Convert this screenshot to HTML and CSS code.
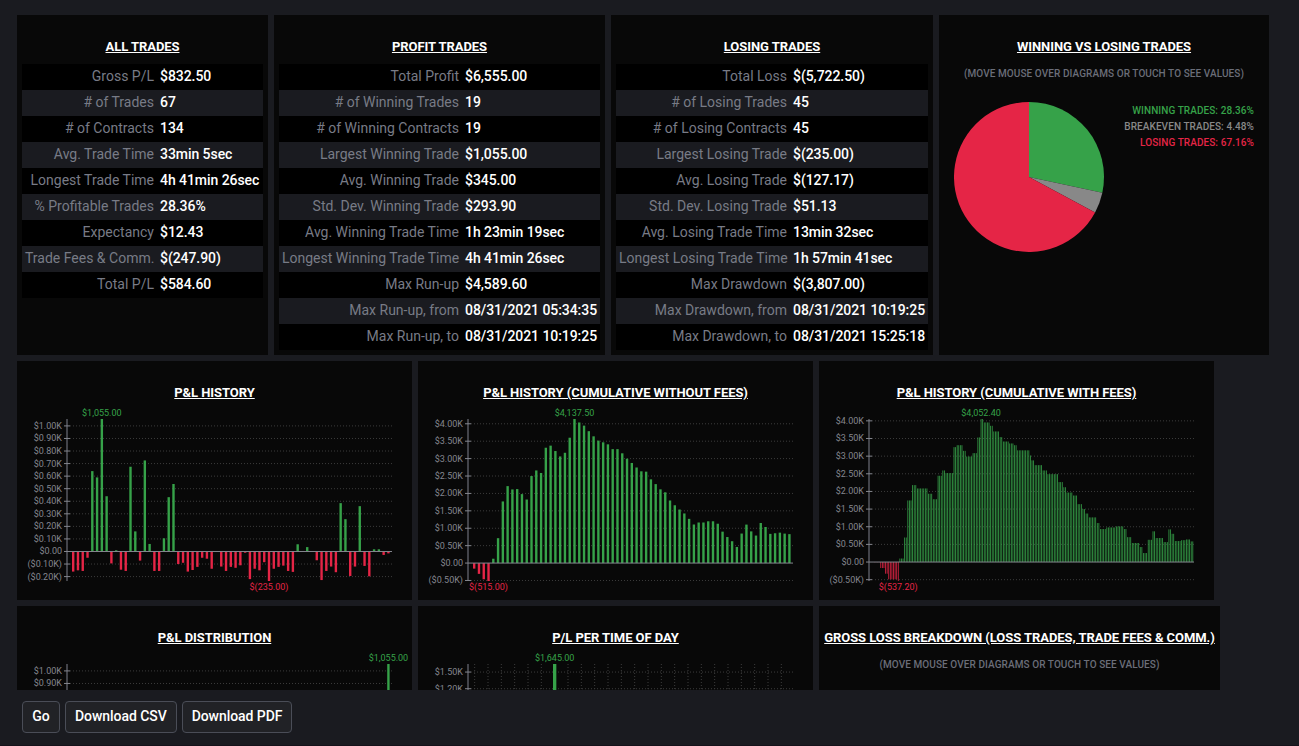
FILE: index.html
```html
<!DOCTYPE html>
<html lang="en">
<head>
    <meta charset="UTF-8">
    <meta name="viewport" content="width=device-width, initial-scale=1.0">
    <title>Trade Performance</title>
    <link rel="stylesheet" href="styles.css">
</head>
<body>

<div class="report">
    <div class="panel-row">
        <div class="panel all-trades">
            <h2>All Trades</h2>
            <table>
                <tr><td>Gross P/L</td><td>$832.50</td></tr>
                <tr><td># of Trades</td><td>67</td></tr>
                <tr><td># of Contracts</td><td>134</td></tr>
                <tr><td>Avg. Trade Time</td><td>33min 5sec</td></tr>
                <tr><td>Longest Trade Time</td><td>4h 41min 26sec</td></tr>
                <tr><td>% Profitable Trades</td><td>28.36%</td></tr>
                <tr><td>Expectancy</td><td>$12.43</td></tr>
                <tr><td>Trade Fees &amp; Comm.</td><td>$(247.90)</td></tr>
                <tr><td>Total P/L</td><td>$584.60</td></tr>
            </table>
        </div>

        <div class="panel profit-trades">
            <h2>Profit Trades</h2>
            <table>
                <tr><td>Total Profit</td><td>$6,555.00</td></tr>
                <tr><td># of Winning Trades</td><td>19</td></tr>
                <tr><td># of Winning Contracts</td><td>19</td></tr>
                <tr><td>Largest Winning Trade</td><td>$1,055.00</td></tr>
                <tr><td>Avg. Winning Trade</td><td>$345.00</td></tr>
                <tr><td>Std. Dev. Winning Trade</td><td>$293.90</td></tr>
                <tr><td>Avg. Winning Trade Time</td><td>1h 23min 19sec</td></tr>
                <tr><td>Longest Winning Trade Time</td><td>4h 41min 26sec</td></tr>
                <tr><td>Max Run-up</td><td>$4,589.60</td></tr>
                <tr><td>Max Run-up, from</td><td>08/31/2021 05:34:35</td></tr>
                <tr><td>Max Run-up, to</td><td>08/31/2021 10:19:25</td></tr>
            </table>
        </div>

        <div class="panel losing-trades">
            <h2>Losing Trades</h2>
            <table>
                <tr><td>Total Loss</td><td>$(5,722.50)</td></tr>
                <tr><td># of Losing Trades</td><td>45</td></tr>
                <tr><td># of Losing Contracts</td><td>45</td></tr>
                <tr><td>Largest Losing Trade</td><td>$(235.00)</td></tr>
                <tr><td>Avg. Losing Trade</td><td>$(127.17)</td></tr>
                <tr><td>Std. Dev. Losing Trade</td><td>$51.13</td></tr>
                <tr><td>Avg. Losing Trade Time</td><td>13min 32sec</td></tr>
                <tr><td>Longest Losing Trade Time</td><td>1h 57min 41sec</td></tr>
                <tr><td>Max Drawdown</td><td>$(3,807.00)</td></tr>
                <tr><td>Max Drawdown, from</td><td>08/31/2021 10:19:25</td></tr>
                <tr><td>Max Drawdown, to</td><td>08/31/2021 15:25:18</td></tr>
            </table>
        </div>

        <div class="panel win-loss">
            <h2>Winning vs Losing Trades</h2>
            <p class="hint">(Move mouse over diagrams or touch to see values)</p>
            <div class="pie-row">
                <svg class="pie" id="winLossPie" viewBox="0 0 150 150"></svg>
                <ul class="legend">
                    <li class="win">Winning Trades: 28.36%</li>
                    <li class="even">Breakeven Trades: 4.48%</li>
                    <li class="loss">Losing Trades: 67.16%</li>
                </ul>
            </div>
        </div>
    </div>

    <div class="panel-row">
        <div class="panel chart-panel">
            <h2>P&amp;L History</h2>
            <svg class="chart" id="historyChart"></svg>
        </div>
        <div class="panel chart-panel">
            <h2>P&amp;L History (Cumulative without fees)</h2>
            <svg class="chart" id="cumulativeChart"></svg>
        </div>
        <div class="panel chart-panel">
            <h2>P&amp;L History (Cumulative with fees)</h2>
            <svg class="chart" id="feesChart"></svg>
        </div>
    </div>

    <div class="panel-row">
        <div class="panel chart-panel">
            <h2>P&amp;L Distribution</h2>
            <svg class="chart" id="distributionChart"></svg>
        </div>
        <div class="panel chart-panel">
            <h2>P/L per time of day</h2>
            <svg class="chart" id="timeChart"></svg>
        </div>
        <div class="panel breakdown">
            <h2>Gross Loss Breakdown (Loss Trades, Trade Fees &amp; Comm.)</h2>
            <p class="hint">(Move mouse over diagrams or touch to see values)</p>
        </div>
    </div>
</div>

<div class="actions">
    <button>Go</button>
    <button>Download CSV</button>
    <button>Download PDF</button>
</div>

<script src="charts.js"></script>
</body>
</html>
```
FILE: styles.css
```css
* {
    box-sizing: border-box;
}

body {
    font-family: Roboto, sans-serif;
    background-color: #1a1b20;
    color: #fff;
    margin: 0;
    height: 746px;
    overflow: hidden;
    border-bottom: 1px solid #15121a;
}

.report {
    height: 690px;
    padding: 15px 0 0 17px;
    overflow: hidden;
}

.panel-row {
    display: flex;
    gap: 6px;
    margin-bottom: 6px;
}

.panel {
    flex: none;
    background-color: #080808;
    padding: 24px 5px 5px;
}

.all-trades {
    width: 251px;
}

.profit-trades {
    width: 331px;
}

.losing-trades {
    width: 322px;
}

.win-loss {
    width: 330px;
}

.chart-panel {
    width: 395px;
    height: 239px;
    padding: 24px 0 0;
}

.breakdown {
    width: 401px;
    height: 239px;
}

h2 {
    margin: 0;
    font-size: 13px;
    font-weight: 700;
    line-height: 16px;
    letter-spacing: -0.06px;
    text-align: center;
    text-transform: uppercase;
    text-decoration: underline;
    white-space: nowrap;
}

table {
    width: 100%;
    margin-top: 9px;
    border-collapse: collapse;
    table-layout: fixed;
    font-size: 14px;
    white-space: nowrap;
}

tr {
    height: 26px;
    background-color: #000;
}

tr:nth-child(even) {
    background-color: #1a1b20;
}

td {
    padding: 0 3px 2px;
    font-weight: 500;
    letter-spacing: -0.06px;
}

td:first-child {
    width: 135px;
    color: #787b86;
    font-weight: 400;
    text-align: right;
    letter-spacing: 0;
}

.profit-trades td:first-child {
    width: 183px;
}

.losing-trades td:first-child {
    width: 174px;
}

.hint {
    margin: 12px 0 0;
    color: #6b6e79;
    font-size: 10px;
    font-weight: 500;
    line-height: 14px;
    letter-spacing: 0.08px;
    text-align: center;
    text-transform: uppercase;
}

.pie-row {
    display: flex;
    justify-content: space-between;
    padding: 21px 10px 0;
}

.pie {
    width: 150px;
    height: 150px;
}

.legend {
    list-style: none;
    margin: 1px 0 0;
    padding: 0;
    font-size: 10px;
    font-weight: 500;
    line-height: 16px;
    letter-spacing: 0.08px;
    text-align: right;
    text-transform: uppercase;
}

.win {
    color: #36a249;
    fill: #36a249;
}

.even {
    color: #888;
    fill: #888;
}

.loss {
    color: #e52546;
    fill: #e52546;
}

.chart {
    display: block;
    width: 395px;
    height: 194px;
    margin-top: 5px;
    font-size: 9px;
}

.chart .label {
    fill: #84868e;
    text-anchor: end;
}

.chart .peak {
    text-anchor: middle;
}

.chart .axis {
    stroke: #43444a;
    stroke-width: 2;
}

.chart .tick {
    stroke: #84868e;
}

.chart .zero {
    stroke: #84868e;
}

.chart .grid {
    stroke: #3c3c3c;
    stroke-dasharray: 1 2;
}

.actions {
    display: flex;
    gap: 5px;
    padding: 11px 22px;
}

button {
    min-width: 38px;
    height: 32px;
    padding: 0 9px 2px;
    background-color: #212226;
    border: 1px solid #4a4d57;
    border-radius: 4px;
    color: #fff;
    font-family: inherit;
    font-size: 14px;
    font-weight: 500;
    letter-spacing: -0.06px;
    cursor: pointer;
}

button:hover {
    background-color: #2c2d33;
}
```
FILE: charts.js
```javascript
const SVG_NS = "http://www.w3.org/2000/svg";

// plot area inside each chart
const LEFT = 55;
const TOP = 13;
const WIDTH = 320;
const HEIGHT = 162;
const AXIS_X = 50;

const trades = [
    -160, -150, -155, -50, 640, 590, 1055, 440, -95, 10,
    -145, -155, 675, 160, -72.5, 725, 60, -155, -155, 105,
    432.5, 537.5, -100, -90, -160, -147.5, -122.5, -50, -57.5, -137.5,
    0, -120, -155, -122.5, -130, -110, -10, -220, -137.5, -150,
    -85, -235, -137.5, -122.5, -112.5, -155, -162.5, 57.5, 0, 35,
    0, -70, -227.5, -155, -120, -165, 385, 257.5, -195, -120,
    361, -115, -197.5, 17.5, 17.5, -27.5, -15
];

// [end position on the time axis, running P/L]
const feeLevels = [
    [6, -4], [10.7, -170], [14, -330], [23.7, -490], [25.3, -537.2], [30, 100],
    [33.7, 695], [38, 1745], [43, 2180], [54.3, 2085], [58, 1935], [64, 1780],
    [67.3, 2445], [72, 2595], [79, 2520], [82, 3255], [88.3, 3310], [91.7, 3150],
    [98, 2990], [103, 3085], [106, 3530], [109.3, 4052.4], [115.7, 3955], [119, 3860],
    [125.3, 3700], [128.7, 3540], [134.7, 3415], [140, 3360], [143.3, 3310], [155, 3165],
    [158, 3020], [161, 2880], [169, 2745], [172.7, 2595], [184, 2490], [188.7, 2265],
    [192, 2120], [198.3, 1970], [203, 1885], [208, 1640], [211, 1500], [215, 1375],
    [223, 1265], [226, 1105], [232, 935], [242, 980], [250, 1010], [253, 935],
    [258, 705], [265, 540], [268, 425], [274, 255], [279, 630], [282, 870],
    [289, 680], [293.7, 565], [297, 925], [300, 800], [307, 595], [311.3, 620],
    [316, 640], [320, 584.6]
];

const hours = [
    -160, -355, 0, 0, 0, 640, 1645, 440, -95, -135,
    835, 652.5, 120, 915, -1271, -630, -420, -265, -190, 0,
    0, 0, 0, 0
];

function add(parent, tag, attrs, text) {
    const el = document.createElementNS(SVG_NS, tag);
    for (const key in attrs) {
        el.setAttribute(key, attrs[key]);
    }
    if (text) {
        el.textContent = text;
    }
    parent.appendChild(el);
    return el;
}

function money(value) {
    const s = Math.abs(value).toLocaleString("en-US", { minimumFractionDigits: 2 });
    return value < 0 ? `$(${s})` : `$${s}`;
}

function thousands(value) {
    if (value === 0) return "$0.00";
    const s = `$${(Math.abs(value) / 1000).toFixed(2)}K`;
    return value < 0 ? `(${s})` : s;
}

function drawChart(id, values, step, barRatio, verticalGrid) {
    const svg = document.getElementById(id);
    const max = Math.max(...values);
    const min = Math.min(...values);
    const slot = WIDTH / values.length;
    const barWidth = slot * barRatio;
    const y = (v) => TOP + (max - v) / (max - min) * HEIGHT;
    const center = (i) => LEFT + i * slot + barWidth / 2;

    if (verticalGrid) {
        values.forEach((v, i) => {
            add(svg, "line", { class: "grid", x1: center(i), x2: center(i), y1: TOP, y2: TOP + HEIGHT });
        });
    }

    add(svg, "line", { class: "axis", x1: AXIS_X, x2: AXIS_X, y1: TOP, y2: TOP + HEIGHT });

    for (let n = Math.ceil(min / step); n * step <= max; n++) {
        const v = n * step;
        add(svg, "line", { class: "tick", x1: AXIS_X - 3, x2: AXIS_X + 3, y1: y(v), y2: y(v) });
        if (v !== 0) {
            add(svg, "line", { class: "grid", x1: AXIS_X + 3, x2: LEFT + WIDTH, y1: y(v), y2: y(v) });
        }
        add(svg, "text", { class: "label", x: AXIS_X - 5, y: y(v) + 3 }, thousands(v));
    }

    values.forEach((v, i) => {
        add(svg, "rect", {
            class: v < 0 ? "loss" : "win",
            x: LEFT + i * slot,
            y: Math.min(y(v), y(0)),
            width: barWidth,
            height: Math.abs(y(v) - y(0))
        });
    });

    add(svg, "line", { class: "zero", x1: AXIS_X + 3, x2: LEFT + WIDTH, y1: y(0), y2: y(0) });

    add(svg, "text", { class: "peak win", x: center(values.indexOf(max)), y: TOP - 3 }, money(max));
    add(svg, "text", { class: "peak loss", x: center(values.indexOf(min)), y: TOP + HEIGHT + 9 }, money(min));
}

function drawPie(id, slices) {
    const svg = document.getElementById(id);
    const point = (p) => {
        const a = p / 100 * Math.PI * 2;
        return `${75 + 75 * Math.sin(a)} ${75 - 75 * Math.cos(a)}`;
    };
    let start = 0;
    slices.forEach(([name, percent]) => {
        const end = start + percent;
        const large = percent > 50 ? 1 : 0;
        add(svg, "path", {
            class: name,
            d: `M75 75 L${point(start)} A75 75 0 ${large} 1 ${point(end)} Z`
        });
        start = end;
    });
}

let total = 0;
const cumulative = trades.map((t) => total += t);

const FEE_BARS = 67 + 134;
const withFees = [];
for (let i = 0; i < FEE_BARS; i++) {
    const pos = (i + 0.25) * WIDTH / FEE_BARS;
    withFees.push(feeLevels.find(([end]) => pos < end)[1]);
}

drawPie("winLossPie", [["win", 28.36], ["even", 4.48], ["loss", 67.16]]);
drawChart("historyChart", trades, 100, 0.5);
drawChart("cumulativeChart", cumulative, 500, 0.5);
drawChart("feesChart", withFees, 500, 0.5);
drawChart("distributionChart", [...trades].sort((a, b) => a - b), 100, 0.5);
drawChart("timeChart", hours, 300, 0.25, true);
```
